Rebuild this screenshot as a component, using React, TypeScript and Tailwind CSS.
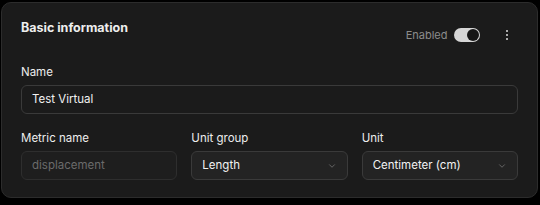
import { ChevronDown } from 'lucide-react';

function Field({ label, children }: { label: string; children: React.ReactNode }) {
  return (
    <div className="flex flex-col gap-[5px]">
      <label className="text-[11.5px] leading-[15px] text-[#ededed]">{label}</label>
      {children}
    </div>
  );
}

function Select({ value }: { value: string }) {
  return (
    <div className="flex h-[29px] items-center justify-between rounded-md border border-[#3a3a3a] bg-[#232323] pl-[10px] pr-[10px] text-[11.5px] text-[#f2f2f2]">
      <span>{value}</span>
      <ChevronDown size={10} strokeWidth={1.5} className="text-[#8a8a8a]" />
    </div>
  );
}

export default function App() {
  return (
    <div className="h-[205px] w-[540px] bg-black pl-px pt-[2px] font-['Inter',sans-serif]">
      <div className="h-[196px] w-[537px] rounded-[10px] border border-[#2c2c2c] bg-[#1b1b1b] px-[19px] pt-[15px]">
        <div className="flex h-[24px] items-start justify-between">
          <h2 className="text-[12.5px] font-bold leading-5 text-[#eeeeee]">Basic information</h2>
          <div className="mr-[10px] mt-[10px] flex items-center">
            <span className="mr-[6px] text-[11px] leading-[14px] text-[#8c8c8c]">Enabled</span>
            <div className="flex h-[14px] w-[26px] items-center justify-end rounded-full bg-[#d6d6d6] pr-px">
              <div className="h-[12px] w-[12px] rounded-full bg-[#161616]" />
            </div>
            <div className="ml-[26px] flex flex-col gap-[1.5px]">
              <span className="h-[2.5px] w-[2.5px] rounded-full bg-[#dcdcdc]" />
              <span className="h-[2.5px] w-[2.5px] rounded-full bg-[#dcdcdc]" />
              <span className="h-[2.5px] w-[2.5px] rounded-full bg-[#dcdcdc]" />
            </div>
          </div>
        </div>

        <div className="mt-[23px]">
          <Field label="Name">
            <div className="flex h-[29px] items-center rounded-md border border-[#3a3a3a] bg-[#1b1b1b] px-[10px] text-[11.5px] text-[#f2f2f2]">
              Test Virtual
            </div>
          </Field>
        </div>

        <div className="mt-[17px] grid grid-cols-3 gap-[14px]">
          <Field label="Metric name">
            <div className="flex h-[29px] items-center rounded-md border border-[#2e2e2e] bg-[#1e1e1e] px-[10px] text-[11.5px] text-[#6b6b6b]">
              displacement
            </div>
          </Field>
          <Field label="Unit group">
            <Select value="Length" />
          </Field>
          <Field label="Unit">
            <Select value="Centimeter (cm)" />
          </Field>
        </div>
      </div>
    </div>
  );
}
